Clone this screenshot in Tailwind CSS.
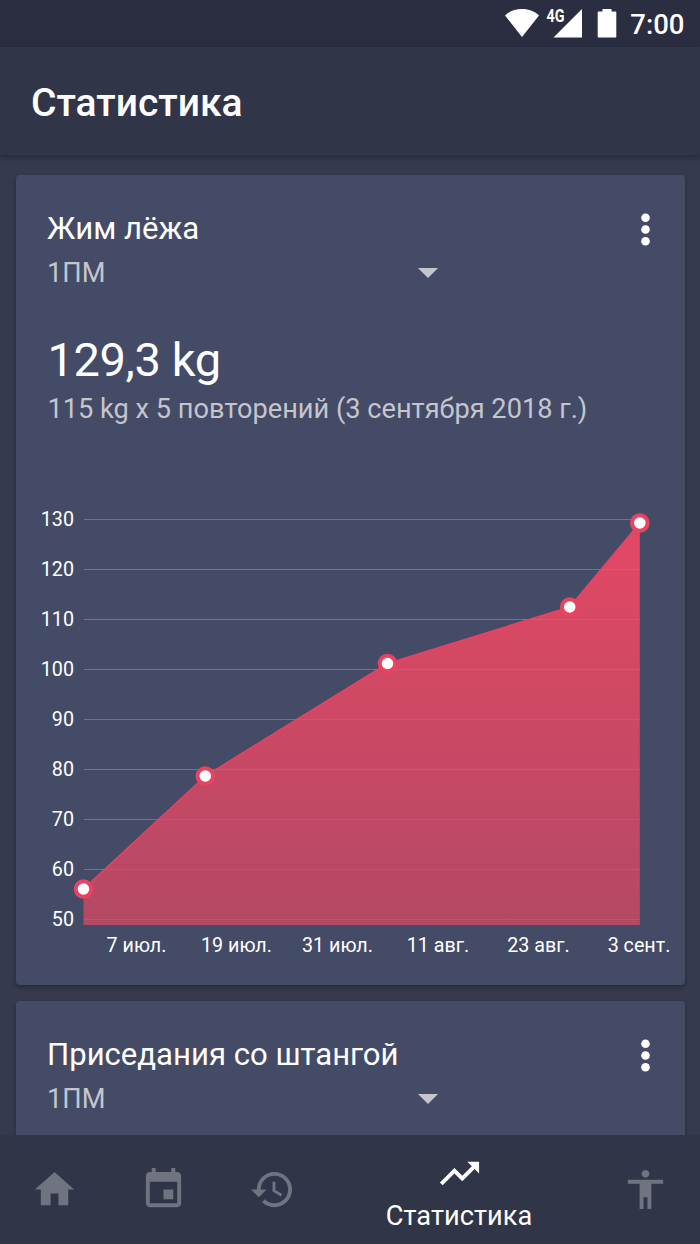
<!doctype html>
<html lang="ru">
<head>
  <meta charset="UTF-8">
  <meta name="viewport" content="width=device-width, initial-scale=1.0">
  <title>Статистика</title>
  <script src="https://cdn.jsdelivr.net/npm/@tailwindcss/browser@4"></script>
</head>
<body class="bg-[#353a4e] h-screen flex flex-col overflow-hidden text-white font-['Roboto',sans-serif]">
    <!-- Status bar -->
    <div class="bg-[#2b2d40] h-[47px] shrink-0 flex items-center justify-end pr-[15.500px]">
        <svg class="w-[36px] h-[47px] mr-[6px]" viewBox="0 0 36 47" fill="#fff">
            <path d="M18 37L1 15.500C5 11.500 11 9 18 9s13 2.500 17 6.500z"/>
        </svg>
        <svg class="w-[37px] h-[47px] mr-[14px]" viewBox="0 0 37 47" fill="#fff">
            <path d="M36 9v28.500H7.500z"/>
            <text x="0.500" y="22" font-size="17.500" font-weight="700" textLength="18" lengthAdjust="spacingAndGlyphs">4G</text>
        </svg>
        <svg class="w-[20px] h-[47px] mr-[13px]" viewBox="0 0 20 47" fill="#fff">
            <path d="M1.500 11.500h4V9h9v2.500h4a.8.8 0 0 1 .8.8v24.400a.8.8 0 0 1-.8.8h-17a.8.8 0 0 1-.8-.8V12.300a.8.8 0 0 1 .8-.8z"/>
        </svg>
        <span class="text-[27.500px] leading-[47px] font-medium pt-[2px]">7:00</span>
    </div>

    <!-- App bar -->
    <header class="relative z-10 bg-[#313548] h-[108px] shrink-0 flex items-center pl-[31px] shadow-[0_3px_6px_rgba(0,0,0,0.25)]">
        <h1 class="text-[39px] leading-[46px] font-medium pt-[3px]">Статистика</h1>
    </header>

    <!-- Exercise cards -->
    <main class="flex-1 min-h-0 overflow-hidden flex flex-col gap-4 px-[15.500px] pt-5">
        <section class="bg-[#444b66] h-[810px] shrink-0 rounded-[4px] shadow-[0_2px_4px_rgba(0,0,0,0.3)]">
            <div class="flex justify-between pl-[31.500px] pr-[15.500px] pt-[35px]">
                <div class="w-[394px]">
                    <h2 class="text-[31.100px] leading-[37px]">Жим лёжа</h2>
                    <div class="mt-[9px] flex items-center justify-between text-[#c4c5cd]">
                        <span class="text-[27.200px] leading-[34px]">1ПМ</span>
                        <svg class="w-[20px] h-[10px] mr-[3px] -mt-px" viewBox="0 0 20 10" fill="currentColor"><path d="M0 0h20L10 10z"/></svg>
                    </div>
                </div>
                <svg class="w-[47px] h-[47px] -mt-[4px]" viewBox="0 0 24 24" fill="#fff">
                    <circle cx="12" cy="6" r="2.200"/><circle cx="12" cy="12" r="2.200"/><circle cx="12" cy="18" r="2.200"/>
                </svg>
            </div>
            <div class="pl-[32px] mt-[42px]">
                <p class="text-[47px] leading-[56px] tracking-[-0.4px]">129,3 kg</p>
                <p class="text-[27.200px] leading-[34px] mt-[4px] text-[#c4c5cd]">115 kg x 5 повторений (3 сентября 2018 г.)</p>
            </div>

            <!-- One rep max chart -->
            <svg class="w-[669px] h-[500px] mt-[48px]" viewBox="16 474 669 500" fill="#fff" font-size="19.700">
                <defs>
                    <linearGradient id="area" x1="0" y1="523" x2="0" y2="925" gradientUnits="userSpaceOnUse">
                        <stop offset="0" stop-color="#e34864"/>
                        <stop offset="1" stop-color="#b44964"/>
                    </linearGradient>
                </defs>
                <path d="M84 519.500H640M84 569.500H640M84 619.500H640M84 669.500H640M84 719.500H640M84 769.500H640M84 819.500H640M84 869.500H640M84 919.500H640" stroke="#74757f" stroke-width="1.200"/>
                <path d="M83.500 889L205.300 776 387.500 663.500 569.700 607 639.800 523V925H83.500z" fill="url(#area)"/>
                <path d="M374 669.500H640M523 619.500H640M601 569.500H640M295 719.500H640M215 769.500H640M158 819.500H640M104 869.500H640M84 919.500H640" stroke="#fff" stroke-opacity=".07"/>
                <path d="M83.500 889L205.300 776 387.500 663.500 569.700 607 639.800 523" fill="none" stroke="#e84361" stroke-width="1.500"/>
                <g stroke="#e84361" stroke-width="4">
                    <circle cx="83.500" cy="889" r="7.800"/>
                    <circle cx="205.300" cy="776" r="7.800"/>
                    <circle cx="387.500" cy="663.500" r="7.800"/>
                    <circle cx="569.700" cy="607" r="7.800"/>
                    <circle cx="639.800" cy="523" r="7.800"/>
                </g>
                <g text-anchor="end">
                    <text x="74" y="525.500">130</text>
                    <text x="74" y="575.500">120</text>
                    <text x="74" y="625.500">110</text>
                    <text x="74" y="675.500">100</text>
                    <text x="74" y="725.500">90</text>
                    <text x="74" y="775.500">80</text>
                    <text x="74" y="825.500">70</text>
                    <text x="74" y="875.500">60</text>
                    <text x="74" y="925.500">50</text>
                </g>
                <g text-anchor="middle">
                    <text x="136.500" y="951.500">7 июл.</text>
                    <text x="236.500" y="951.500">19 июл.</text>
                    <text x="337.500" y="951.500">31 июл.</text>
                    <text x="438" y="951.500">11 авг.</text>
                    <text x="538.500" y="951.500">23 авг.</text>
                    <text x="639" y="951.500">3 сент.</text>
                </g>
            </svg>
        </section>

        <section class="bg-[#444b66] h-[810px] shrink-0 rounded-[4px] shadow-[0_2px_4px_rgba(0,0,0,0.3)]">
            <div class="flex justify-between pl-[31.500px] pr-[15.500px] pt-[35px]">
                <div class="w-[394px]">
                    <h2 class="text-[31.100px] leading-[37px]">Приседания со штангой</h2>
                    <div class="mt-[9px] flex items-center justify-between text-[#c4c5cd]">
                        <span class="text-[27.200px] leading-[34px]">1ПМ</span>
                        <svg class="w-[20px] h-[10px] mr-[3px] -mt-px" viewBox="0 0 20 10" fill="currentColor"><path d="M0 0h20L10 10z"/></svg>
                    </div>
                </div>
                <svg class="w-[47px] h-[47px] -mt-[4px]" viewBox="0 0 24 24" fill="#fff">
                    <circle cx="12" cy="6" r="2.200"/><circle cx="12" cy="12" r="2.200"/><circle cx="12" cy="18" r="2.200"/>
                </svg>
            </div>
        </section>
    </main>

    <!-- Bottom navigation -->
    <nav class="relative bg-[#313548] h-[109px] shrink-0 flex text-[#707380]">
        <a class="w-[109px] flex items-center justify-center">
            <svg class="w-[47px] h-[47px]" viewBox="0 0 24 24" fill="currentColor"><path d="M10 20v-6h4v6h5v-8h3L12 3 2 12h3v8z"/></svg>
        </a>
        <a class="w-[109px] flex items-center justify-center">
            <svg class="w-[47px] h-[47px]" viewBox="0 0 24 24" fill="currentColor"><path d="M17 12h-5v5h5v-5zM16 1v2H8V1H6v2H5c-1.110 0-1.990.9-1.990 2L3 19c0 1.100.89 2 2 2h14c1.100 0 2-.9 2-2V5c0-1.100-.9-2-2-2h-1V1h-2zm3 18H5V8h14v11z"/></svg>
        </a>
        <a class="w-[109px] flex items-center justify-center">
            <svg class="w-[47px] h-[47px]" viewBox="0 0 24 24" fill="currentColor"><path d="M13 3c-4.970 0-9 4.030-9 9H1l3.890 3.890.07.14L9 12H6c0-3.870 3.130-7 7-7s7 3.130 7 7-3.130 7-7 7c-1.930 0-3.680-.79-4.940-2.060l-1.420 1.420C8.270 19.990 10.510 21 13 21c4.970 0 9-4.030 9-9s-4.030-9-9-9zm-1 5v5l4.280 2.540.72-1.210-3.500-2.080V8H12z"/></svg>
        </a>
        <a class="w-[264px] flex flex-col items-center pt-[15px] text-white">
            <svg class="w-[47px] h-[47px]" viewBox="0 0 24 24" fill="currentColor"><path d="M16 6l2.290 2.290-4.880 4.880-4-4L2 16.590 3.410 18l6-6 4 4 6.300-6.290L22 12V6z"/></svg>
            <span class="text-[27.200px] leading-[34px] mt-[2px]">Статистика</span>
        </a>
        <a class="w-[109px] flex items-center justify-center">
            <svg class="w-[47px] h-[47px]" viewBox="0 0 24 24" fill="currentColor"><path d="M12 2c1.100 0 2 .9 2 2s-.9 2-2 2-2-.9-2-2 .9-2 2-2zm9 7h-6v13h-2v-6h-2v6H9V9H3V7h18v2z"/></svg>
        </a>
    </nav>
</body>
</html>
